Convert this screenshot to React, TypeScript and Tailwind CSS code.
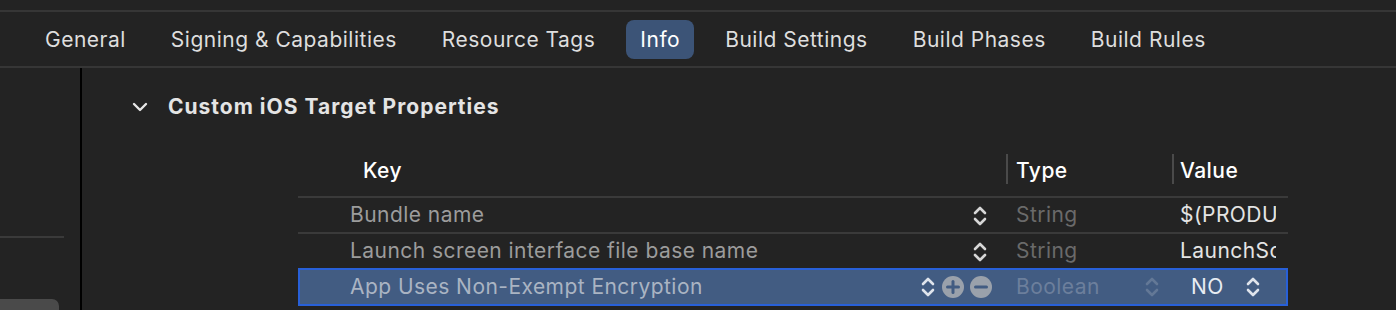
import React from 'react';

const tabs = ['General', 'Signing & Capabilities', 'Resource Tags', 'Info', 'Build Settings', 'Build Phases', 'Build Rules'];

const Stepper = ({ className = '' }: { className?: string }) => (
    <svg width="16" height="24" viewBox="0 0 16 24" className={className} fill="none" stroke="currentColor" strokeWidth="2.6" strokeLinecap="round" strokeLinejoin="round">
        <path d="M3 9 L8 4 L13 9" />
        <path d="M3 15 L8 20 L13 15" />
    </svg>
);

const CircleButton = ({ minus = false }: { minus?: boolean }) => (
    <svg width="22" height="22" viewBox="0 0 22 22">
        <circle cx="11" cy="11" r="11" fill="#9aa1ab" />
        <path d="M5.5 11 H16.5" stroke="#425c82" strokeWidth="3" strokeLinecap="round" />
        {!minus && <path d="M11 5.5 V16.5" stroke="#425c82" strokeWidth="3" strokeLinecap="round" />}
    </svg>
);

export default function App() {
    return (
        <div className="w-full h-[310px] bg-[#232323] overflow-hidden text-[21px] tracking-[0.45px]" style={{ fontFamily: 'Inter, "Liberation Sans", sans-serif' }}>
            <div className="h-[10px]" />
            <div className="h-[2px] bg-[#363636]" />
            {/* tab bar */}
            <div className="h-[54px] flex items-center gap-[17px] pl-[31px] pt-[1px] tracking-[0.5px]">
                {tabs.map((t) => (
                    <div key={t} className={`h-[39px] px-[14px] flex items-center rounded-[8px] whitespace-nowrap ${t === 'Info' ? 'bg-[#3c5477] text-white' : 'text-[#dedede]'}`}>{t}</div>
                ))}
            </div>
            <div className="h-[2px] bg-[#363636]" />

            <div className="flex h-[243px]">
                {/* sidebar */}
                <div className="w-[80px] flex flex-col">
                    <div className="h-[168px]" />
                    <div className="w-[64px] h-[2px] bg-[#3a3a3a]" />
                    <div className="flex-1" />
                    <div className="w-[59px] h-[12px] bg-[#4a4a4a] rounded-tr-[7px]" />
                </div>
                <div className="w-[2px] bg-black" />

                {/* content */}
                <div className="flex-1 flex flex-col">
                    <div className="flex items-center h-[26px] mt-[26px] pl-[50px]">
                        <svg width="16" height="10" viewBox="0 0 16 10" fill="none" stroke="#e6e6e6" strokeWidth="2.4" strokeLinecap="round" strokeLinejoin="round">
                            <path d="M2 2 L8 8 L14 2" />
                        </svg>
                        <span className="ml-[20px] font-bold text-[#e4e4e4] tracking-[1px]">Custom iOS Target Properties</span>
                    </div>

                    <div className="ml-[216px] w-[990px] mt-[34px] flex flex-col">
                        {/* header */}
                        <div className="flex h-[42px] items-start">
                            <div className="w-[708px] pl-[65px] pt-[1px] text-white font-medium">Key</div>
                            <div className="w-[2px] h-[30px] bg-[#4a4a4a]" />
                            <div className="w-[164px] pl-[8px] pt-[1px] text-white font-medium">Type</div>
                            <div className="w-[2px] h-[30px] bg-[#4a4a4a]" />
                            <div className="flex-1 pl-[6px] pt-[1px] text-white font-medium">Value</div>
                        </div>
                        <div className="h-[2px] bg-[#3a3a3a]" />

                        {/* rows */}
                        {[
                            { k: 'Bundle name', v: '$(PRODUCT_NAME)' },
                            { k: 'Launch screen interface file base name', v: 'LaunchScreen' },
                        ].map((r, i) => (
                            <React.Fragment key={r.k}>
                                <div className="flex h-[34px] items-center">
                                    <div className="w-[674px] pl-[52px] text-[#9c9c9c] whitespace-nowrap">{r.k}</div>
                                    <Stepper className="text-[#d6d6d6] mt-[2px]" />
                                    <div className="w-[28px]" />
                                    <div className="w-[164px] text-[#6a6a6a]">String</div>
                                    <div className="w-[96px] overflow-hidden whitespace-nowrap text-[#e4e4e4]">{r.v}</div>
                                </div>
                                {i === 0 && <div className="h-[2px] bg-[#3a3a3a]" />}
                            </React.Fragment>
                        ))}

                        <div className="flex h-[38px] items-center bg-[#425c82] border-2 border-[#2860d8]">
                            <div className="w-[620px] pl-[50px] text-[#aab4c3] whitespace-nowrap">App Uses Non-Exempt Encryption</div>
                            <Stepper className="text-[#dfe4ec]" />
                            <div className="w-[6px]" />
                            <CircleButton />
                            <div className="w-[6px]" />
                            <CircleButton minus />
                            <div className="w-[24px]" />
                            <div className="w-[128px] text-[#6c7f9c]">Boolean</div>
                            <Stepper className="text-[#637896]" />
                            <div className="w-[31px]" />
                            <div className="w-[54px] text-[#e8ecf2]">NO</div>
                            <Stepper className="text-[#dfe4ec]" />
                        </div>
                    </div>
                </div>
            </div>
        </div>
    );
}
